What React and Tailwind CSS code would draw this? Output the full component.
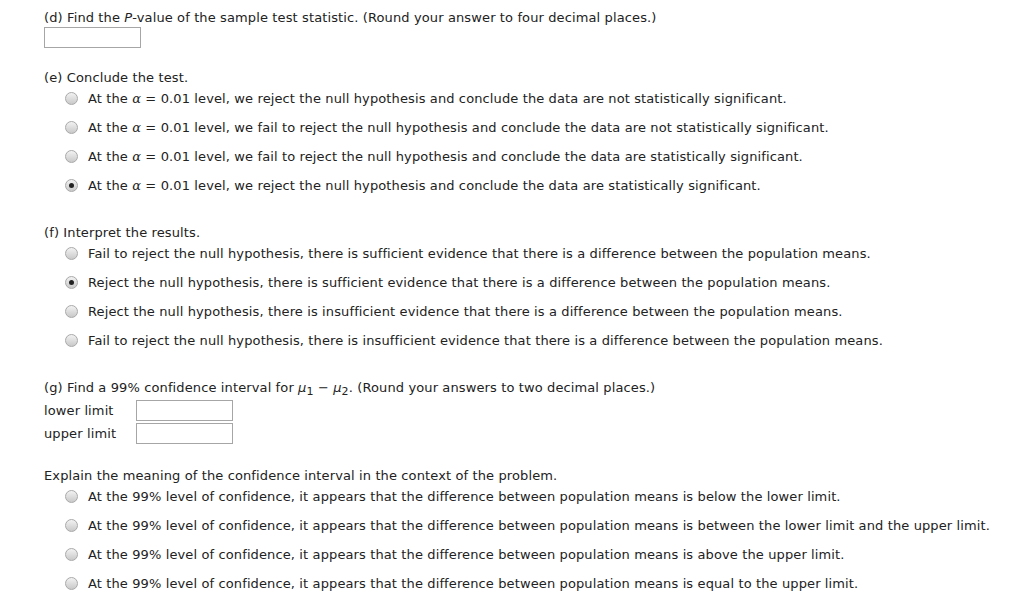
const Radio = ({ checked }) => (
  <span className="relative flex h-[13px] w-[13px] shrink-0 items-center justify-center rounded-full border border-[#a9a9a9] bg-gradient-to-b from-[#f2f2f2] to-[#c9c9c9]">
    {checked && <span className="h-[5px] w-[5px] rounded-full bg-[#222]" />}
  </span>
);

const Option = ({ checked, children }) => (
  <div className="ml-[21px] flex h-[29px] items-center gap-[10px] whitespace-nowrap">
    <Radio checked={checked} />
    <span>{children}</span>
  </div>
);

const Box = ({ className = "" }) => (
  <div className={`h-[21px] w-[97px] border border-[#a6a6a6] bg-white ${className}`} />
);

const Alpha = () => <i className="font-['DejaVu_Serif',serif]">α</i>;

export default function App() {
  const e = [
    [false, "we reject the null hypothesis and conclude the data are not statistically significant."],
    [false, "we fail to reject the null hypothesis and conclude the data are not statistically significant."],
    [false, "we fail to reject the null hypothesis and conclude the data are statistically significant."],
    [true, "we reject the null hypothesis and conclude the data are statistically significant."],
  ];
  const f = [
    [false, "Fail to reject the null hypothesis, there is sufficient evidence that there is a difference between the population means."],
    [true, "Reject the null hypothesis, there is sufficient evidence that there is a difference between the population means."],
    [false, "Reject the null hypothesis, there is insufficient evidence that there is a difference between the population means."],
    [false, "Fail to reject the null hypothesis, there is insufficient evidence that there is a difference between the population means."],
  ];
  const g = [
    "is below the lower limit.",
    "is between the lower limit and the upper limit.",
    "is above the upper limit.",
    "is equal to the upper limit.",
  ];

  return (
    <div className="min-h-[602px] bg-white pl-[44px] pt-[8px] font-['DejaVu_Sans',sans-serif] text-[13px] tracking-[0.12px] text-[#222]">
      <div className="leading-[19px]">
        (d) Find the <i>P</i>-value of the sample test statistic. (Round your answer to four decimal places.)
      </div>
      <Box />

      <div className="mt-[20px] leading-[20px]">(e) Conclude the test.</div>
      <div className="-mt-[4px]">
        {e.map(([c, t], i) => (
          <Option key={i} checked={c}>
            At the <Alpha /> = 0.01 level, {t}
          </Option>
        ))}
      </div>

      <div className="mt-[23px] leading-[20px]">(f) Interpret the results.</div>
      <div className="-mt-[4px]">
        {f.map(([c, t], i) => (
          <Option key={i} checked={c}>{t}</Option>
        ))}
      </div>

      <div className="mt-[23px] leading-[20px]">
        (g) Find a 99% confidence interval for <i>μ</i>
        <sub className="text-[11px]">1</sub> − <i>μ</i>
        <sub className="text-[11px]">2</sub>. (Round your answers to two decimal places.)
      </div>
      <div className="mt-[1px]">
        <div className="flex h-[23px] items-center">
          <span className="w-[92px]">lower limit</span>
          <Box />
        </div>
        <div className="flex h-[23px] items-center">
          <span className="w-[92px]">upper limit</span>
          <Box />
        </div>
      </div>

      <div className="mt-[21px] leading-[20px]">Explain the meaning of the confidence interval in the context of the problem.</div>
      <div className="-mt-[4px]">
        {g.map((t, i) => (
          <Option key={i}>
            At the 99% level of confidence, it appears that the difference between population means {t}
          </Option>
        ))}
      </div>
    </div>
  );
}
